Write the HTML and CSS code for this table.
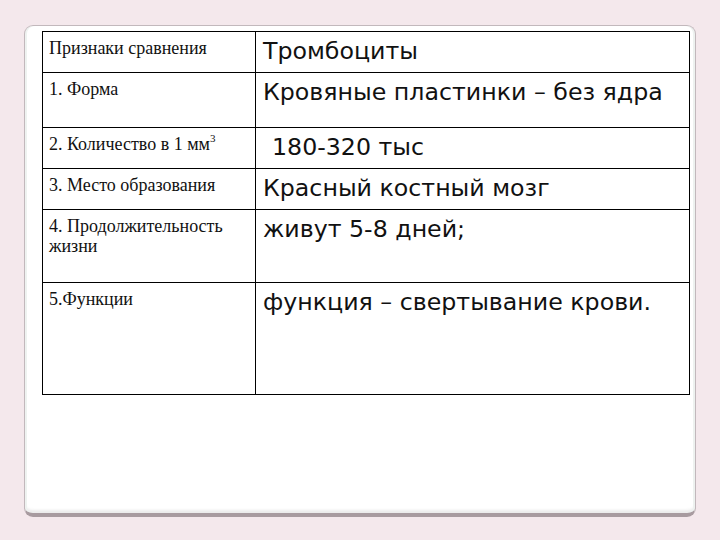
FILE: index.html
```html
<!DOCTYPE html>
<html lang="ru">
<head>
<meta charset="utf-8">
<link rel="stylesheet" href="styles.css">
</head>
<body>
<div class="card">
  <table class="cmp">
    <tr class="r1"><td class="k">Признаки сравнения</td><td class="v">Тромбоциты</td></tr>
    <tr class="r2"><td class="k">1. Форма</td><td class="v">Кровяные пластинки – без ядра</td></tr>
    <tr class="r3"><td class="k">2. Количество в 1 мм<sup>3</sup></td><td class="v"><span class="ind">180-320 тыс</span></td></tr>
    <tr class="r4"><td class="k">3. Место образования</td><td class="v">Красный костный мозг</td></tr>
    <tr class="r5"><td class="k">4. Продолжительность жизни</td><td class="v">живут 5-8 дней;</td></tr>
    <tr class="r6"><td class="k">5.Функции</td><td class="v">функция – свертывание крови.</td></tr>
  </table>
</div>
</body>
</html>
```
FILE: styles.css
```css
html, body {
  margin: 0;
  padding: 0;
}
body {
  background: #f4e8ec;
  width: 720px;
  height: 540px;
  overflow: hidden;
  padding-top: 25px;
  box-sizing: border-box;
}
.card {
  margin-left: 24px;
  width: 672px;
  height: 492px;
  background: #ffffff;
  border: 1px solid #c2b8bc;
  border-bottom: 4px solid #a89ba0;
  border-radius: 9px;
  box-shadow: inset 2px 0 0 #eef2f0, inset -2px 0 0 #eef2f0, inset 0 -3px 3px #ececec;
  padding: 5px 0 0 17px;
  box-sizing: border-box;
}
.cmp {
  border-collapse: collapse;
  width: 648px;
}
.cmp td {
  border: 1px solid #000;
  vertical-align: top;
  padding: 0;
}
.k {
  width: 200px;
  font-family: "Liberation Serif", "Times New Roman", serif;
  font-size: 18px;
  line-height: 20px;
  color: #111;
  padding: 6px 6px 0 6px !important;
}
.v {
  font-family: "DejaVu Sans", Verdana, sans-serif;
  font-size: 23.7px;
  line-height: 28px;
  color: #111;
  padding: 5px 6px 0 7px !important;
}
.ind { padding-left: 9px; }
sup {
  font-size: 11px;
  line-height: 0;
  vertical-align: 8px;
}
.r1 { height: 41px; }
.r2 { height: 55px; }
.r3 { height: 41px; }
.r4 { height: 41px; }
.r5 { height: 73px; }
.r6 { height: 112px; }
```
